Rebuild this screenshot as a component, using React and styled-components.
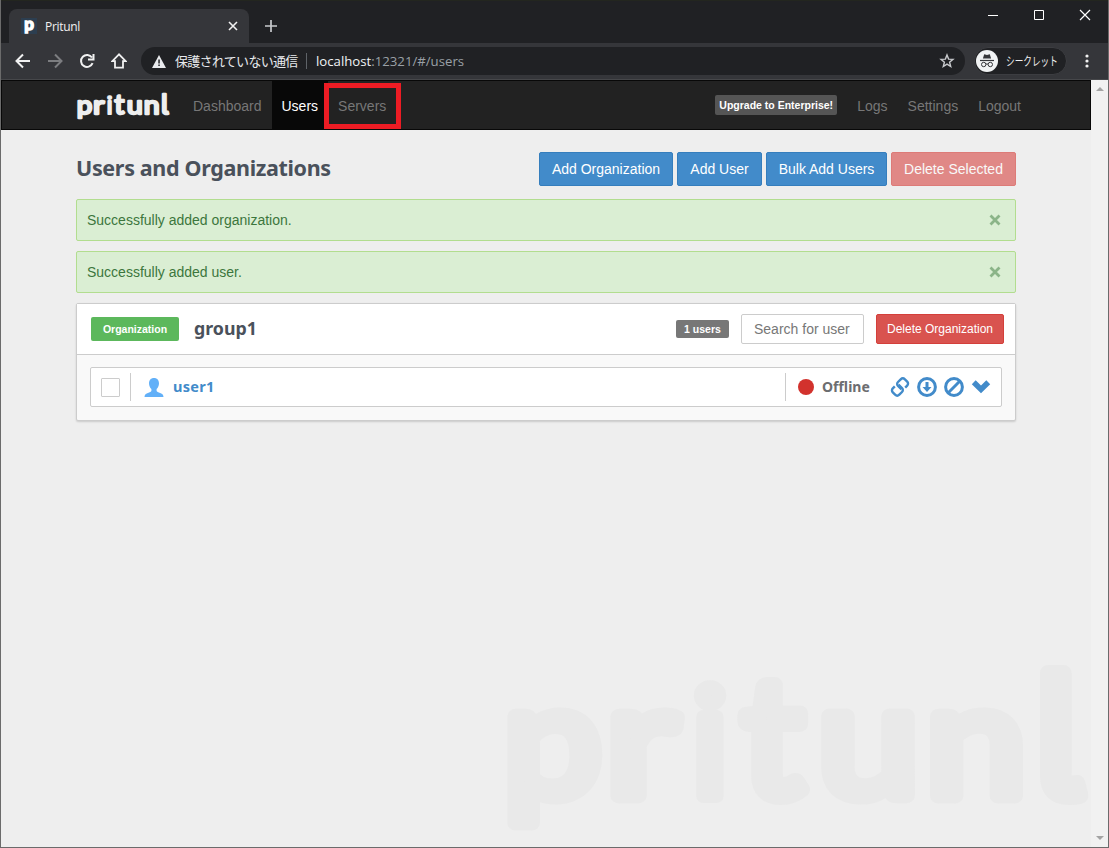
import React, { useState } from 'react';
import styled, { createGlobalStyle, css } from 'styled-components';

const GlobalStyle = createGlobalStyle`
  * {
    box-sizing: border-box;
  }

  body {
    margin: 0;
    overflow: hidden;
    font-family: 'Liberation Sans', Arial, sans-serif;
    font-size: 14px;
    line-height: 20px;
    color: #333;
  }

  button, input {
    font-family: inherit;
  }
`;

const uiFont = "'Open Sans', 'Noto Sans CJK JP', sans-serif";
const titleFont = "'Noto Sans', sans-serif";

const BrowserWindow = styled.div`
  width: 1109px;
  height: 848px;
  display: flex;
  flex-direction: column;
  border: 1px solid #6b6b6b;
  border-top: 0;
  background: #202124;
  position: relative;
`;

const TitleBar = styled.div`
  height: 43px;
  display: flex;
  align-items: flex-end;
  justify-content: space-between;
  padding-left: 8px;
  border-top: 1px solid #23261f;
`;

const TabStrip = styled.div`
  display: flex;
  align-items: flex-end;
`;

const Tab = styled.div`
  width: 240px;
  height: 34px;
  display: flex;
  align-items: center;
  padding: 0 11px 0 12px;
  border-radius: 8px 8px 0 0;
  background: #35363a;
  color: #f1f1f1;
  font: 12px/16px ${uiFont};
`;

const Favicon = styled.div`
  width: 16px;
  height: 16px;
  margin-right: 8px;
  background: #2c3e50;
  color: #fff;
  font: 900 17px/12px Lato, sans-serif;
  text-align: center;
  -webkit-text-stroke: 1.3px #fff;
`;

const TabTitle = styled.span`
  flex: 1;
  padding-top: 1px;
  letter-spacing: -0.3px;
`;

const NewTab = styled.div`
  width: 43px;
  height: 34px;
  display: flex;
  align-items: center;
  justify-content: center;
`;

const WindowControls = styled.div`
  height: 42px;
  display: flex;
  gap: 34px;
  padding: 8px 17px 0 0;
`;

const Toolbar = styled.div`
  height: 37px;
  display: flex;
  align-items: center;
  padding: 0 15px 0 14px;
  background: #35363a;
  border-bottom: 1px solid #46474a;
`;

const NavIcons = styled.div`
  display: flex;
  gap: 16px;
  width: 126px;
`;

const AddressBar = styled.div`
  width: 824px;
  height: 28px;
  display: flex;
  align-items: center;
  padding: 0 10px 0 11px;
  border-radius: 14px;
  background: #202124;
  color: #9aa0a6;
  font: 13.2px/20px ${uiFont};
`;

const SecurityText = styled.span`
  width: 123px;
  margin-left: 9px;
  color: #e8eaed;
  font-size: 13px;
  letter-spacing: -0.7px;
  white-space: nowrap;
`;

const Divider = styled.span`
  width: 1px;
  height: 16px;
  margin: 0 9px 0 8px;
  background: #5f6368;
`;

const Url = styled.span`
  flex: 1;

  b {
    color: #f1f3f4;
    font-weight: 400;
  }
`;

const Incognito = styled.div`
  width: 93px;
  height: 28px;
  margin: 0 18px 0 9px;
  display: flex;
  align-items: center;
  gap: 8px;
  padding-left: 1px;
  border: 1px solid #3c3d41;
  border-radius: 14px;
  background: #202124;
  color: #f1f1f1;
  font: 12px/16px ${uiFont};

  span {
    width: 72px;
    flex: none;
    padding-top: 1px;
    transform: scaleX(0.72);
    transform-origin: left;
  }
`;

const Viewport = styled.div`
  flex: 1;
  display: flex;
  min-height: 0;
`;

const Page = styled.div`
  width: 1090px;
  height: 100%;
  position: relative;
  background: #eee;
`;

const ScrollBar = styled.div`
  width: 17px;
  display: flex;
  flex-direction: column;
  justify-content: space-between;
  align-items: center;
  padding: 7px 0;
  background: #f1f1f1;
`;

const Arrow = styled.i`
  border: 4px solid transparent;
  border-top-width: 0;
  border-bottom-color: #a3a3a3;
  transform: ${({ $down }) => ($down ? 'rotate(180deg)' : 'none')};
`;

const Header = styled.header`
  height: 50px;
  display: flex;
  justify-content: space-between;
  padding: 0 59px 0 75px;
  background: #222;
  border: 1px solid #080808;
`;

const NavGroup = styled.nav`
  display: flex;
  align-items: center;
`;

const NavItem = styled.a`
  height: 48px;
  display: flex;
  align-items: center;
  padding: 2px 10px 0;
  color: ${({ $active }) => ($active ? '#fff' : '#777')};
  background: ${({ $active }) => ($active ? '#080808' : 'transparent')};
`;

const Brand = styled.div`
  width: 92px;
  height: 48px;
  margin-right: 14px;
  padding-top: 12px;
`;

const Upgrade = styled.span`
  width: 122px;
  height: 20px;
  margin-right: 10px;
  border-radius: 2px;
  background: #555;
  color: #fff;
  font-size: 10.5px;
  font-weight: 700;
  line-height: 20px;
  text-align: center;
  white-space: nowrap;
`;

const Highlight = styled.div`
  position: absolute;
  z-index: 2;
  left: 323px;
  top: 3px;
  width: 77px;
  height: 46px;
  border: 5px solid #ed1c24;
`;

const Watermark = styled.div`
  position: absolute;
  left: 504px;
  top: 581px;
  width: 586px;
  height: 185px;
`;

const Content = styled.main`
  position: relative;
  width: 940px;
  margin-left: 75px;
  padding-top: 22px;
`;

const TitleRow = styled.div`
  display: flex;
  align-items: flex-start;
  justify-content: space-between;
  margin-bottom: 13px;
`;

const Title = styled.h1`
  margin: 0;
  color: #4a515b;
  font: 700 21.5px/32px ${titleFont};
  letter-spacing: -0.34px;
  white-space: nowrap;
`;

const Buttons = styled.div`
  display: flex;
  gap: 4px;
`;

const buttonTones = {
  primary: css`
    background: #428bca;
    border-color: #357ebd;
  `,
  danger: css`
    background: #d9534f;
    border-color: #d43f3a;
  `,
};

const Button = styled.button`
  width: ${({ $width }) => $width}px;
  height: ${({ $small }) => ($small ? 30 : 34)}px;
  padding: 0;
  border: 1px solid;
  border-radius: 2px;
  color: #fff;
  font-size: ${({ $small }) => ($small ? 12 : 14)}px;
  line-height: 20px;
  white-space: nowrap;
  opacity: ${({ disabled }) => (disabled ? 0.65 : 1)};
  ${({ $tone }) => buttonTones[$tone]}
`;

const Alert = styled.div`
  height: 42px;
  display: flex;
  align-items: center;
  justify-content: space-between;
  margin-bottom: 10px;
  padding: 0 14px 0 10px;
  border: 1px solid #b2dd8f;
  border-radius: 2px;
  background: #daeed3;
  color: #3c763d;
`;

const Panel = styled.section`
  height: 118px;
  border: 1px solid #ccc;
  border-radius: 2px;
  background: #f9f9f9;
  box-shadow: 0 1px 2px rgba(0, 0, 0, 0.15);
`;

const PanelHeader = styled.div`
  height: 51px;
  display: flex;
  align-items: center;
  padding: 0 11px 0 14px;
  background: #fff;
  border-bottom: 1px solid #ccc;
`;

const OrgLabel = styled.span`
  width: 88px;
  height: 24px;
  border-radius: 2px;
  background: #5cb85c;
  color: #fff;
  font-size: 10.5px;
  font-weight: 700;
  line-height: 24px;
  text-align: center;
`;

const OrgName = styled.h2`
  flex: 1;
  margin: -2px 0 0 15px;
  color: #4a515b;
  font: 700 17.8px/24px ${titleFont};
`;

const UserCount = styled.span`
  width: 53px;
  height: 18px;
  border-radius: 2px;
  background: #777;
  color: #fff;
  font-size: 10.5px;
  font-weight: 700;
  line-height: 18px;
  text-align: center;
`;

const Search = styled.input`
  width: 123px;
  height: 30px;
  margin: 0 12px;
  padding: 0 12px;
  border: 1px solid #ccc;
  border-radius: 2px;
  font-size: 14px;
  outline: none;

  &::placeholder {
    color: #777;
  }
`;

const UserRow = styled.div`
  height: 40px;
  display: flex;
  align-items: center;
  margin: 12px 13px 0;
  padding: 0 10px;
  border: 1px solid #ccc;
  border-radius: 2px;
  background: #fff;
`;

const CheckBox = styled.button`
  width: 19px;
  height: 19px;
  padding: 0;
  border: 1px solid #ccc;
  border-radius: 1px;
  background: ${({ $checked }) => ($checked ? '#428bca' : '#fff')};
`;

const RowDivider = styled.span`
  width: 1px;
  height: 28px;
  margin: 0 ${({ $gap }) => $gap}px 0 ${({ $before }) => $before || 0}px;
  background: #ccc;
`;

const UserName = styled.a`
  flex: 1;
  margin-left: 9px;
  padding-bottom: 2px;
  color: #428bca;
  font: 700 14.5px/20px ${titleFont};
  letter-spacing: 0.3px;
`;

const StatusDot = styled.span`
  width: 16px;
  height: 16px;
  border-radius: 50%;
  background: #d2322d;
`;

const Status = styled.span`
  width: 68px;
  margin-left: 8px;
  color: #6c6d70;
  font: 700 14px/20px ${titleFont};
`;

const Actions = styled.div`
  display: flex;
  align-items: center;
  gap: 7px;
`;

// Each letter is placed and stretched on its own, the round stroke softens the corners
const letters = [
  { char: 'p', x: 503.5, sx: 1.12, sy: 1.01 },
  { char: 'r', x: 606, sx: 1.25, sy: 1.01 },
  { char: 'i', x: 692, sx: 0.95, sy: 0.93, font: 'Inter' },
  { char: 't', x: 742, sx: 1.1, sy: 1.06 },
  { char: 'u', x: 818, sx: 1.16, sy: 1.01 },
  { char: 'n', x: 926, sx: 1.15, sy: 1.01 },
  { char: 'l', x: 1035, sx: 1.1, sy: 1.08, font: 'Inter' },
];

const Wordmark = ({ width, color }) => (
  <svg width={width} height={(width * 185) / 586} viewBox="505 661 586 185" style={{ display: 'block', overflow: 'visible' }}>
    <g fill={color} stroke={color} strokeWidth="15" strokeLinejoin="round" fontWeight="400" fontSize="156">
      {letters.map(({ char, x, sx, sy, font }) => (
        <text
          key={char}
          fontFamily={`${font || 'Lato'}, sans-serif`}
          fontFeatureSettings="normal"
          transform={`translate(${x} 795.5) scale(${sx} ${sy})`}
          style={font ? { fontFeatureSettings: "'cv05' 1" } : undefined}
        >
          {char}
        </text>
      ))}
    </g>
  </svg>
);

const LineIcon = ({ size = 16, color = '#f1f1f1', weight = 2, d, box = 16 }) => (
  <svg width={size} height={size} viewBox={`0 0 ${box} ${box}`} fill="none" stroke={color} strokeWidth={weight}>
    <path d={d} />
  </svg>
);

const WarningIcon = () => (
  <svg width="14" height="13" viewBox="0 0 14 13">
    <path d="M7 0 14 13H0Z" fill="#e8eaed" />
    <path d="M6.3 4.5h1.5v4H6.3zM6.3 9.6h1.5v1.5H6.3z" fill="#202124" />
  </svg>
);

const StarIcon = () => (
  <svg width="16" height="16" viewBox="0 0 16 16" fill="none" stroke="#c8cacd" strokeWidth="1.4">
    <path d="m8 2 1.6 4.1 4.4.3-3.4 2.8 1.1 4.3L8 11.1l-3.7 2.4 1.1-4.3L2 6.4l4.4-.3Z" />
  </svg>
);

const IncognitoIcon = () => (
  <svg width="22" height="22" viewBox="0 0 22 22" style={{ flex: 'none' }}>
    <circle cx="11" cy="11" r="11" fill="#f1f3f4" />
    <path d="M8.2 4.3 11 5l2.8-.7 1.3 4.2H6.9Z" fill="#35363a" />
    <path d="M4 10.5h14" stroke="#35363a" strokeWidth="1.2" />
    <g fill="none" stroke="#35363a">
      <circle cx="7.7" cy="14.5" r="2.2" />
      <circle cx="14.3" cy="14.5" r="2.2" />
      <path d="M9.9 14.2q1.1-.6 2.2 0" />
    </g>
  </svg>
);

const MoreIcon = () => (
  <svg width="4" height="14" viewBox="0 0 4 14" fill="#f1f1f1">
    <circle cx="2" cy="2" r="1.6" />
    <circle cx="2" cy="7" r="1.6" />
    <circle cx="2" cy="12" r="1.6" />
  </svg>
);

const UserIcon = () => (
  <svg width="20" height="19" viewBox="0 0 20 19">
    <path fill="#62b0f8" d="M10 0c3.2 0 5 2.2 5 5.3 0 2.4-1 4.5-2.4 5.700v1.700c0 .8 1 1.300 2.900 2 2.700 1 4 1.800 4 4.300H.5c0-2.500 1.300-3.300 4-4.300 1.900-.7 2.900-1.200 2.900-2V11C6 9.800 5 7.700 5 5.300 5 2.200 6.800 0 10 0Z" />
  </svg>
);

const LinkIcon = () => (
  <svg width="20" height="20" viewBox="0 0 20 20" fill="none" stroke="#428bca" strokeWidth="2.4">
    <path d="M11.500 12.300 8 9a2.800 2.800 0 0 1 0-4l2.700-2.700a3 3 0 0 1 4.200 0l2.300 2.300a2.800 2.800 0 0 1 0 4l-2 2" />
    <path d="M8.500 7.700 12 11a2.800 2.800 0 0 1 0 4l-2.700 2.700a3 3 0 0 1-4.200 0l-2.300-2.300a2.800 2.800 0 0 1 0-4l2-2" />
  </svg>
);

const DownloadIcon = () => (
  <svg width="20" height="20" viewBox="0 0 20 20">
    <circle cx="10" cy="10" r="8.4" fill="none" stroke="#428bca" strokeWidth="3" />
    <path d="M8.5 5h3v5h3L10 15l-4.500-5h3Z" fill="#428bca" />
  </svg>
);

const DisableIcon = () => (
  <svg width="20" height="20" viewBox="0 0 20 20" fill="none" stroke="#428bca" strokeWidth="3">
    <circle cx="10" cy="10" r="8.4" />
    <path d="M4.3 15.7 15.7 4.3" />
  </svg>
);

const ChevronIcon = () => (
  <svg width="20" height="20" viewBox="0 0 20 20">
    <path d="M.8 7.2 4.7 3.3 10 8.500l5.300-5.200 3.900 3.900L10 16.300Z" fill="#428bca" />
  </svg>
);

const alerts = ['Successfully added organization.', 'Successfully added user.'];

const App = () => {
  const [messages, setMessages] = useState(alerts);
  const [selected, setSelected] = useState(false);

  return (
    <>
      <GlobalStyle />
      <BrowserWindow>
        <TitleBar>
          <TabStrip>
            <Tab>
              <Favicon>p</Favicon>
              <TabTitle>Pritunl</TabTitle>
              <LineIcon size={10} box={10} weight={1.6} d="m1 1 8 8M9 1 1 9" />
            </Tab>
            <NewTab>
              <LineIcon size={12} box={12} weight={1.7} color="#c8cacd" d="M6 0v12M0 6h12" />
            </NewTab>
          </TabStrip>
          <WindowControls>
            <LineIcon size={12} box={12} weight={1} color="#fff" d="M1 6.5h10" />
            <LineIcon size={12} box={12} weight={1} color="#fff" d="M1.5 1.5h9v9h-9z" />
            <LineIcon size={12} box={12} weight={1.2} color="#fff" d="m1 1 10 10M11 1 1 11" />
          </WindowControls>
        </TitleBar>
        <Toolbar>
          <NavIcons>
            <LineIcon d="M15 8H2M8 1.5 1.5 8 8 14.5" />
            <LineIcon color="#7c7d80" d="M1 8h13M8 1.5 14.5 8 8 14.5" />
            <LineIcon d="M13.6 10.2A6 6 0 1 1 13 4.5M14.500 1v5.500H9" />
            <LineIcon weight={1.8} d="M8 1.400 1.300 8.200H4v6.400h8V8.200h2.700Z" />
          </NavIcons>
          <AddressBar>
            <WarningIcon />
            <SecurityText>保護されていない通信</SecurityText>
            <Divider />
            <Url><b>localhost</b>:12321/#/users</Url>
            <StarIcon />
          </AddressBar>
          <Incognito>
            <IncognitoIcon />
            <span>シークレット</span>
          </Incognito>
          <MoreIcon />
        </Toolbar>
        <Viewport>
          <Page>
            <Header>
              <NavGroup>
                <Brand><Wordmark width={93} color="#eee" /></Brand>
                <NavItem>Dashboard</NavItem>
                <NavItem $active>Users</NavItem>
                <NavItem>Servers</NavItem>
              </NavGroup>
              <NavGroup>
                <Upgrade>Upgrade to Enterprise!</Upgrade>
                <NavItem>Logs</NavItem>
                <NavItem>Settings</NavItem>
                <NavItem>Logout</NavItem>
              </NavGroup>
            </Header>
            <Highlight />
            <Watermark><Wordmark width={586} color="#e9e9e9" /></Watermark>
            <Content>
              <TitleRow>
                <Title>Users and Organizations</Title>
                <Buttons>
                  <Button $tone="primary" $width={134}>Add Organization</Button>
                  <Button $tone="primary" $width={85}>Add User</Button>
                  <Button $tone="primary" $width={121}>Bulk Add Users</Button>
                  <Button $tone="danger" $width={125} disabled={!selected}>Delete Selected</Button>
                </Buttons>
              </TitleRow>
              {messages.map((message) => (
                <Alert key={message}>
                  {message}
                  <svg width="12" height="12" viewBox="0 0 12 12" onClick={() => setMessages(messages.filter((m) => m !== message))}>
                    <path d="m1.5 1.5 9 9M10.5 1.5l-9 9" stroke="#8bb488" strokeWidth="2.8" />
                  </svg>
                </Alert>
              ))}
              <Panel>
                <PanelHeader>
                  <OrgLabel>Organization</OrgLabel>
                  <OrgName>group1</OrgName>
                  <UserCount>1 users</UserCount>
                  <Search placeholder="Search for user" />
                  <Button $tone="danger" $width={128} $small>Delete Organization</Button>
                </PanelHeader>
                <UserRow>
                  <CheckBox $checked={selected} onClick={() => setSelected(!selected)} />
                  <RowDivider $before={10} $gap={13} />
                  <UserIcon />
                  <UserName>user1</UserName>
                  <RowDivider $gap={12} />
                  <StatusDot />
                  <Status>Offline</Status>
                  <Actions>
                    <LinkIcon />
                    <DownloadIcon />
                    <DisableIcon />
                    <ChevronIcon />
                  </Actions>
                </UserRow>
              </Panel>
            </Content>
          </Page>
          <ScrollBar>
            <Arrow />
            <Arrow $down />
          </ScrollBar>
        </Viewport>
      </BrowserWindow>
    </>
  );
};

export default App;
